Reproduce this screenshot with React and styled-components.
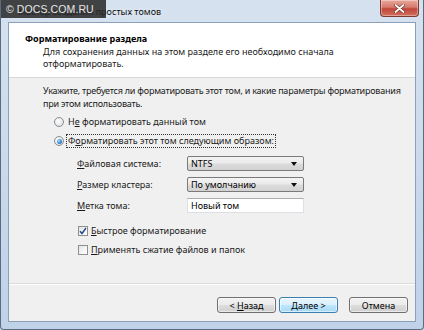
import React from "react";
import styled, { createGlobalStyle } from "styled-components";

const GlobalStyle = createGlobalStyle`
  html, body {
    margin: 0;
    padding: 0;
    background: #c9d8ea;
  }
  * {
    box-sizing: border-box;
  }
`;

const Window = styled.div`
  position: relative;
  width: 424px;
  height: 330px;
  display: flex;
  flex-direction: column;
  padding: 0 7px 7px 7px;
  border: 1px solid #5a6b82;
  border-top: none;
  border-radius: 0 0 4px 4px;
  background: linear-gradient(180deg, #d6e2ef 0%, #cddbec 40%, #bfd2e8 100%);
  font-family: "Noto Sans", "Open Sans", sans-serif;
  font-size: 9px;
  color: #1a1a1a;
  overflow: hidden;
`;

const Watermark = styled.div`
  position: absolute;
  left: 0;
  top: 0;
  width: 105px;
  height: 18px;
  display: flex;
  align-items: center;
  padding-left: 5px;
  background: rgba(38, 38, 38, 0.85);
  color: #e6e6e6;
  font-family: "Liberation Sans", Arial, sans-serif;
  font-size: 10.5px;
  letter-spacing: 0.1px;
`;

const TitleBar = styled.div`
  height: 22px;
  display: flex;
  align-items: flex-start;
  padding-left: 10px;
`;

const TitleText = styled.div`
  margin-top: 5px;
  font-size: 9px;
  color: #111;
  white-space: nowrap;
  text-shadow: 0 0 6px rgba(255, 255, 255, 0.9);
`;

const CloseButton = styled.div`
  margin-left: auto;
  margin-right: -3px;
  width: 39px;
  height: 17px;
  display: flex;
  align-items: center;
  justify-content: center;
  border: 1px solid #7d3a33;
  border-top: none;
  border-radius: 0 0 4px 4px;
  background: linear-gradient(180deg, #e8a99c 0%, #d67a6c 45%, #c0463a 55%, #d1705e 100%);
  box-shadow: inset 0 0 0 1px rgba(255, 255, 255, 0.35);
`;

const Client = styled.div`
  flex: 1;
  display: flex;
  flex-direction: column;
  border: 1px solid #8aa0ba;
  background: #f0f0f0;
`;

const Header = styled.div`
  height: 55px;
  background: #ffffff;
  border-bottom: 1px solid #d9d9d9;
  padding: 10px 0 0 16px;
`;

const HeaderTitle = styled.div`
  font-weight: 700;
  font-size: 9px;
  line-height: 12px;
  color: #000;
`;

const HeaderText = styled.div`
  margin-top: 1px;
  padding-left: 18px;
  line-height: 12px;
  color: #222;
  white-space: nowrap;
`;

const Body = styled.div`
  flex: 1;
  padding: 6px 0 0 34px;
`;

const Intro = styled.div`
  line-height: 13px;
  white-space: nowrap;
  letter-spacing: -0.22px;
`;

const OptionRow = styled.div`
  display: flex;
  align-items: center;
  height: 14px;
  margin-top: ${(p) => p.$top}px;
  padding-left: ${(p) => p.$indent}px;
  white-space: nowrap;
`;

const Radio = styled.span`
  width: 10px;
  height: 10px;
  border-radius: 50%;
  border: 1px solid #8a8f94;
  background: radial-gradient(circle at 40% 40%, #ffffff 0%, #e6e8ea 60%, #cfd2d5 100%);
  display: flex;
  align-items: center;
  justify-content: center;
  flex-shrink: 0;

  &::after {
    content: "";
    width: 5px;
    height: 5px;
    border-radius: 50%;
    display: ${(p) => (p.$checked ? "block" : "none")};
    background: radial-gradient(circle at 35% 35%, #a6d8fb 0%, #3a8bd4 55%, #1b5894 100%);
  }
`;

const Checkbox = styled.span`
  width: 10px;
  height: 10px;
  border: 1px solid #8e8f8f;
  background: linear-gradient(135deg, #e2e3e5 0%, #f6f6f6 60%, #ffffff 100%);
  display: flex;
  align-items: center;
  justify-content: center;
  flex-shrink: 0;
`;

const OptionLabel = styled.span`
  margin-left: ${(p) => p.$gap}px;
  padding: 0 1px;
  line-height: 12px;
  border: 1px ${(p) => (p.$focused ? "dotted #333" : "solid transparent")};
`;

const Key = styled.span`
  text-decoration: underline;
`;

const Form = styled.div`
  display: grid;
  grid-template-columns: 110px 117px;
  grid-auto-rows: 15px;
  row-gap: 6px;
  margin-top: 8px;
  padding-left: 34px;
  align-items: center;
  white-space: nowrap;
`;

const FieldLabel = styled.span`
  line-height: 15px;
`;

const Select = styled.div`
  height: 15px;
  display: flex;
  align-items: center;
  justify-content: space-between;
  padding: 0 6px 0 3px;
  border: 1px solid #7a7a7a;
  border-radius: 2px;
  background: linear-gradient(180deg, #f4f4f4 0%, #eaeaea 48%, #dcdcdc 52%, #d2d2d2 100%);
  color: #000;
`;

const Arrow = styled.span`
  width: 0;
  height: 0;
  border-left: 3.5px solid transparent;
  border-right: 3.5px solid transparent;
  border-top: 4px solid #111;
`;

const TextField = styled.div`
  height: 15px;
  display: flex;
  align-items: center;
  padding: 0 3px;
  background: #ffffff;
  border: 1px solid #dcdfe3;
  border-top-color: #abadb3;
  color: #000;
`;

const Footer = styled.div`
  height: 38px;
  border-top: 1px solid #dcdcdc;
  box-shadow: inset 0 1px 0 #ffffff;
  display: flex;
  justify-content: flex-end;
  align-items: flex-start;
  padding: 13px 7px 0 0;
`;

const Button = styled.div`
  width: 59px;
  height: 16px;
  display: flex;
  align-items: center;
  justify-content: center;
  margin-left: ${(p) => p.$gap}px;
  border: 1px solid ${(p) => (p.$primary ? "#3c7fb1" : "#707070")};
  border-radius: 3px;
  background: ${(p) =>
    p.$primary
      ? "linear-gradient(180deg, #eaf6fd 0%, #d9f0fc 48%, #bee6fd 52%, #a7d9f5 100%)"
      : "linear-gradient(180deg, #f2f2f2 0%, #ebebeb 48%, #dddddd 52%, #cfcfcf 100%)"};
  box-shadow: inset 0 0 0 1px rgba(255, 255, 255, 0.55);
  color: #000;
  white-space: nowrap;
`;

const App = () => {
  return (
    <>
      <GlobalStyle />
      <Window>
        <TitleBar>
          <TitleText>Мастер создания простых томов</TitleText>
          <CloseButton>
            <svg width="11" height="9" viewBox="0 0 11 9">
              <path
                d="M1.5 1 L9.5 8 M9.5 1 L1.5 8"
                stroke="#6b2a22"
                strokeWidth="3"
                strokeLinecap="round"
              />
              <path
                d="M1.5 1 L9.5 8 M9.5 1 L1.5 8"
                stroke="#ffffff"
                strokeWidth="1.8"
                strokeLinecap="round"
              />
            </svg>
          </CloseButton>
        </TitleBar>
        <Watermark>© DOCS.COM.RU</Watermark>
        <Client>
          <Header>
            <HeaderTitle>Форматирование раздела</HeaderTitle>
            <HeaderText>
              Для сохранения данных на этом разделе его необходимо сначала
              <br />
              отформатировать.
            </HeaderText>
          </Header>
          <Body>
            <Intro>
              Укажите, требуется ли форматировать этот том, и какие параметры форматирования
              <br />
              при этом использовать.
            </Intro>
            <OptionRow $top={5} $indent={11}>
              <Radio />
              <OptionLabel $gap={2}>
                Н<Key>е</Key> форматировать данный том
              </OptionLabel>
            </OptionRow>
            <OptionRow $top={5} $indent={11}>
              <Radio $checked />
              <OptionLabel $gap={2} $focused>
                Ф<Key>о</Key>рматировать этот том следующим образом:
              </OptionLabel>
            </OptionRow>
            <Form>
              <FieldLabel>
                <Key>Ф</Key>айловая система:
              </FieldLabel>
              <Select>
                NTFS
                <Arrow />
              </Select>
              <FieldLabel>
                <Key>Р</Key>азмер кластера:
              </FieldLabel>
              <Select>
                По умолчанию
                <Arrow />
              </Select>
              <FieldLabel>
                <Key>М</Key>етка тома:
              </FieldLabel>
              <TextField>Новый том</TextField>
            </Form>
            <OptionRow $top={11} $indent={35}>
              <Checkbox>
                <svg width="8" height="8" viewBox="0 0 8 8">
                  <path
                    d="M1 4.2 L3 6.5 L7 1"
                    fill="none"
                    stroke="#2a4d8f"
                    strokeWidth="1.5"
                  />
                </svg>
              </Checkbox>
              <OptionLabel $gap={1}>
                <Key>Б</Key>ыстрое форматирование
              </OptionLabel>
            </OptionRow>
            <OptionRow $top={5} $indent={35}>
              <Checkbox />
              <OptionLabel $gap={1}>
                <Key>П</Key>рименять сжатие файлов и папок
              </OptionLabel>
            </OptionRow>
          </Body>
          <Footer>
            <Button $gap={0}>
              &lt;&nbsp;<Key>Н</Key>азад
            </Button>
            <Button $gap={3} $primary>
              <Key>Д</Key>алее &gt;
            </Button>
            <Button $gap={11}>Отмена</Button>
          </Footer>
        </Client>
      </Window>
    </>
  );
};

export default App;
